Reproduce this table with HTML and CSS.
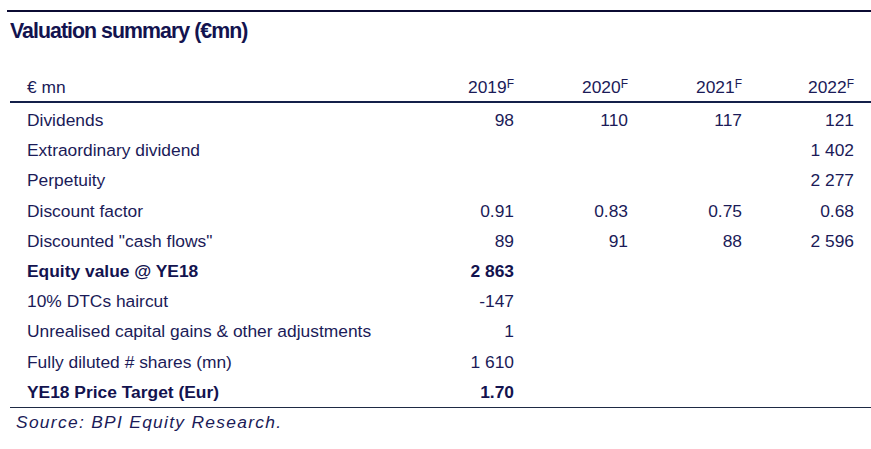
FILE: index.html
```html
<!DOCTYPE html>
<html>
<head>
<meta charset="utf-8">
<link rel="stylesheet" href="styles.css">
</head>
<body>
<div class="page">
  <div class="rule-top"></div>
  <h1 class="title">Valuation summary (€mn)</h1>
  <table class="val">
    <colgroup>
      <col class="c-label"><col class="c-num"><col class="c-num"><col class="c-num"><col class="c-last">
    </colgroup>
    <thead>
      <tr><th class="lbl">€ mn</th><th>2019<sup>F</sup></th><th>2020<sup>F</sup></th><th>2021<sup>F</sup></th><th class="last">2022<sup>F</sup></th></tr>
    </thead>
    <tbody>
      <tr><td class="lbl">Dividends</td><td>98</td><td>110</td><td>117</td><td class="last">121</td></tr>
      <tr><td class="lbl">Extraordinary dividend</td><td></td><td></td><td></td><td class="last">1 402</td></tr>
      <tr><td class="lbl">Perpetuity</td><td></td><td></td><td></td><td class="last">2 277</td></tr>
      <tr><td class="lbl">Discount factor</td><td>0.91</td><td>0.83</td><td>0.75</td><td class="last">0.68</td></tr>
      <tr><td class="lbl">Discounted "cash flows"</td><td>89</td><td>91</td><td>88</td><td class="last">2 596</td></tr>
      <tr class="bold"><td class="lbl">Equity value @ YE18</td><td>2 863</td><td></td><td></td><td class="last"></td></tr>
      <tr><td class="lbl">10% DTCs haircut</td><td>-147</td><td></td><td></td><td class="last"></td></tr>
      <tr><td class="lbl">Unrealised capital gains &amp; other adjustments</td><td>1</td><td></td><td></td><td class="last"></td></tr>
      <tr><td class="lbl">Fully diluted # shares (mn)</td><td>1 610</td><td></td><td></td><td class="last"></td></tr>
      <tr class="bold end"><td class="lbl">YE18 Price Target (Eur)</td><td>1.70</td><td></td><td></td><td class="last"></td></tr>
    </tbody>
  </table>
  <p class="source">Source: BPI Equity Research.</p>
</div>
</body>
</html>
```
FILE: styles.css
```css
html, body {
  margin: 0;
  padding: 0;
  background: #ffffff;
}
.page {
  width: 871px;
  height: 449px;
  padding-top: 10px;
  box-sizing: border-box;
  font-family: "Liberation Sans", Arial, sans-serif;
  color: #1b1b58;
}
.rule-top {
  margin-left: 7px;
  height: 2px;
  background: #0b0b33;
}
.title {
  margin: 6px 0 0 10px;
  font-size: 22px;
  font-weight: bold;
  letter-spacing: -1px;
  line-height: 26px;
  height: 26px;
  color: #13134f;
  transform: scaleX(0.97);
  transform-origin: left center;
}
.val {
  margin: 22px 0 0 10px;
  width: 861px;
  border-collapse: collapse;
  table-layout: fixed;
  font-size: 17.4px;
}
.c-label { width: 390px; }
.c-num { width: 114px; }
.c-last { width: 129px; }
.val th, .val td {
  padding: 0;
  text-align: right;
  font-weight: normal;
  white-space: nowrap;
}
.val .lbl {
  text-align: left;
  padding-left: 17px;
}
.val .last {
  padding-right: 17px;
}
.val thead th {
  vertical-align: bottom;
  padding-bottom: 3px;
  border-bottom: 2px solid #14204a;
}
.val thead tr {
  height: 36px;
}
.val tbody td {
  height: 30.2px;
  line-height: 18px;
  vertical-align: middle;
}
.val tbody tr:first-child td {
  padding-top: 2px;
}
.val sup {
  font-size: 12px;
  vertical-align: 5px;
  line-height: 0;
}
.val tr.bold td {
  font-weight: bold;
  color: #13134f;
}
.val tr.end td {
  border-bottom: 1px solid #1e2a44;
}
.source {
  margin: 4px 0 0 16px;
  font-size: 17.4px;
  font-style: italic;
  letter-spacing: 1.3px;
  color: #1b1b58;
}
```
